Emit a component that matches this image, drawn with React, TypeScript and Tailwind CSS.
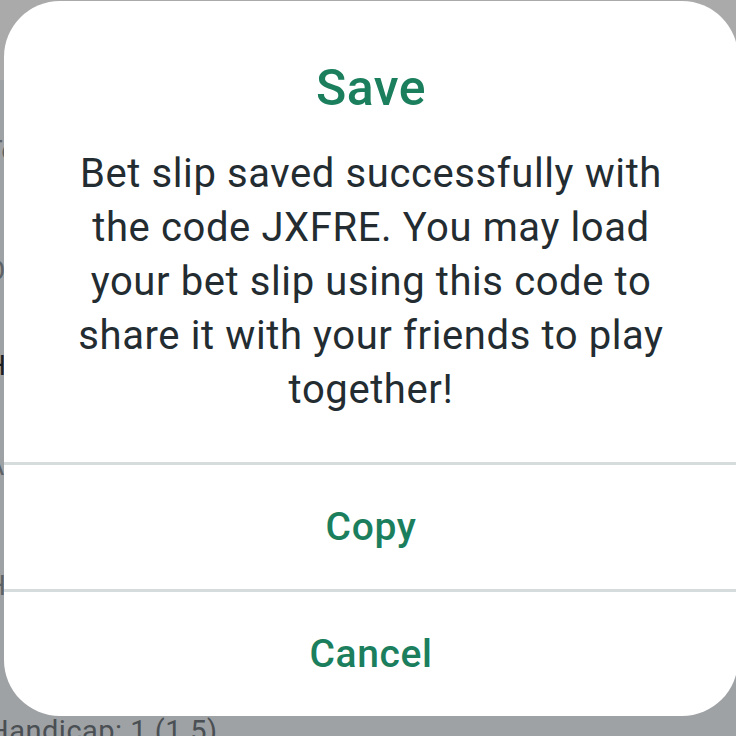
const font = { fontFamily: "Roboto, 'Noto Sans', Arial, sans-serif" };

// rows of the bet slip page that sits behind the dialog
const backdropRows = [
  { label: "Today", h: "h-[100px]", tone: "text-[#5d6266]" },
  { label: "Over 2.5", h: "h-[120px]", tone: "text-[#5d6266]" },
  { label: "Handicap", h: "h-[95px]", tone: "text-[#1c1f21]" },
  { label: "Away", h: "h-[100px]", tone: "text-[#5d6266]" },
  { label: "Handicap", h: "h-[120px]", tone: "text-[#5d6266]" },
  { label: "-", h: "h-[96px]", tone: "text-[#1c1f21]" },
];

const Divider = () => <div className="h-[3px] w-full bg-[#d5dcdb]" />;

const ActionRow = ({ children }: { children: React.ReactNode }) => (
  <button
    type="button"
    className="flex h-[124px] w-full items-center justify-center text-[39px] font-medium tracking-[0.6px] text-[#1b7f5e]"
  >
    {children}
  </button>
);

export default function App() {
  return (
    <div className="relative h-[736px] w-[736px] overflow-hidden bg-[#9ea2a5]" style={font}>
      {/* Page behind the dialog (dimmed) */}
      <div className="flex flex-col">
        <div className="h-[80px] bg-[#aaaaaa]" />
        {backdropRows.map((row, i) => (
          <div
            key={`${row.label}-${i}`}
            className={`${row.h} -ml-[14px] flex items-end pb-2 text-[28px] ${row.tone}`}
          >
            {row.label}
          </div>
        ))}
        <div className="-ml-[12px] whitespace-nowrap text-[29px] leading-[40px] tracking-[0.5px] text-[#4a4f53]">
          Handicap: 1 (1.5)
        </div>
      </div>

      {/* Dialog */}
      <div className="absolute left-[4px] top-[1px] flex w-[734px] flex-col overflow-hidden rounded-[56px] bg-white">
        <h2 className="pt-[57px] text-center text-[50px] font-medium leading-[60px] tracking-[0.5px] text-[#1b7f5e]">
          Save
        </h2>
        <p className="mt-[29px] pb-[45px] text-center text-[40px] leading-[54px] tracking-[0.6px] text-[#232c31]">
          Bet slip saved successfully with
          <br />
          the code JXFRE. You may load
          <br />
          your bet slip using this code to
          <br />
          share it with your friends to play
          <br />
          together!
        </p>
        <Divider />
        <ActionRow>Copy</ActionRow>
        <Divider />
        <ActionRow>Cancel</ActionRow>
      </div>
    </div>
  );
}
